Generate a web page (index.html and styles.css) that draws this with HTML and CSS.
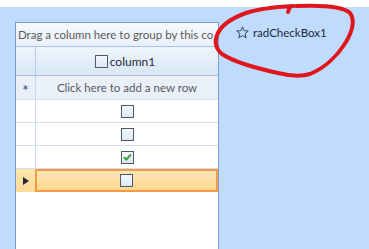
FILE: index.html
```html
<!DOCTYPE html>
<html lang="en">
<head>
  <meta charset="UTF-8">
  <title>Grid with check box column</title>
  <link rel="stylesheet" href="styles.css">
</head>
<body>
  <div class="topbar"></div>

  <div class="form">
    <div class="grid">
      <div class="group-panel">Drag a column here to group by this co</div>

      <div class="row header-row">
        <div class="indicator"></div>
        <div class="cell"><span class="check"></span>column1</div>
      </div>

      <div class="row new-row">
        <div class="indicator">*</div>
        <div class="cell">Click here to add a new row</div>
      </div>

      <div class="row">
        <div class="indicator"></div>
        <div class="cell"><span class="check"></span></div>
      </div>
      <div class="row">
        <div class="indicator"></div>
        <div class="cell"><span class="check"></span></div>
      </div>
      <div class="row">
        <div class="indicator"></div>
        <div class="cell"><span class="check checked">
          <svg width="9" height="8" viewBox="0 0 9 8"><path d="M1 4.2 L3.4 6.5 L8 1.5" fill="none" stroke="#3fa33c" stroke-width="2"/></svg>
        </span></div>
      </div>
      <div class="row current">
        <div class="indicator">
          <svg width="6" height="8" viewBox="0 0 6 8"><path d="M0 0 L6 4 L0 8 Z" fill="#1e2a3a"/></svg>
        </div>
        <div class="cell"><span class="check"></span></div>
      </div>
    </div>

    <div class="radio-check">
      <svg class="star" width="13" height="13" viewBox="0 0 13 13">
        <path d="M6.5 0.8 L8.1 4.7 L12.3 5 L9.1 7.7 L10.1 11.8 L6.5 9.6 L2.9 11.8 L3.9 7.7 L0.7 5 L4.9 4.7 Z" fill="none" stroke="#2d4768" stroke-width="1"/>
      </svg>
      <span>radCheckBox1</span>
    </div>
  </div>

  <!-- red marker annotation round the check box -->
  <svg class="annotation" width="369" height="249" viewBox="0 0 369 249">
    <path d="M288 12 C289 8 291 6 293 6 C275 7 258 9 246 13 C232 18 222 25 218 33 C214 41 215 48 222 54 C234 62 255 68 278 73 C290 76 300 77 310 74 C325 68 338 55 346 42 C353 30 355 20 350 13 C343 6 320 5 296 6"
          fill="none" stroke="#e0161c" stroke-width="4" stroke-linecap="round" stroke-linejoin="round"/>
  </svg>
</body>
</html>
```

FILE: styles.css
```css
body {
  margin: 0;
  height: 249px;
  overflow: hidden;
  background: #bfdbfe;
  font-family: Lato, "Noto Sans", sans-serif;
  font-size: 11.5px;
  color: #333;
  position: relative;
}
.topbar {
  height: 7px;
  background: #fff;
}
.form {
  display: flex;
  padding: 15px 0 0 15px;
}
.grid {
  width: 202px;
  height: 240px;
  border: 1px solid #7b9fd2;
  background: #fff;
  flex-shrink: 0;
}
.group-panel {
  height: 23px;
  line-height: 23px;
  padding-left: 2px;
  border-bottom: 1px solid #a9c1e2;
  background: linear-gradient(#f6f9fd, #e9f0fa);
  color: #5a5a5a;
  white-space: nowrap;
  overflow: hidden;
}
.row {
  display: flex;
  height: 22px;
  border-bottom: 1px solid #d3dfee;
}
.indicator {
  width: 19px;
  border-right: 1px solid #c9d8ec;
  display: flex;
  align-items: center;
  justify-content: center;
  flex-shrink: 0;
}
.cell {
  flex: 1;
  display: flex;
  align-items: center;
  justify-content: center;
}
.header-row {
  height: 28px;
  border-bottom: 1px solid #a9c1e2;
  background: linear-gradient(#eef4fb, #dae6f5);
  color: #1e2a3a;
  font-size: 12px;
}
.header-row .indicator {
  border-right-color: #b6cbe6;
}
.header-row .check {
  margin: 0 2px 0 -4px;
}
.new-row {
  height: 23px;
  background: #e9f0fa;
  color: #5a5a5a;
}
.new-row .indicator {
  font-size: 15px;
  color: #1e3a6a;
  padding-top: 4px;
}
.check {
  width: 11px;
  height: 11px;
  border: 1px solid #4b5a6e;
  background: linear-gradient(#f4f7fc, #dde6f3);
  display: inline-flex;
  align-items: center;
  justify-content: center;
}
.current {
  height: 23px;
  border-bottom: none;
  background: linear-gradient(#fde8b8, #fcd58c);
}
.current .indicator {
  border-right: none;
  background: linear-gradient(#fde6ad, #fcdc98);
}
.current .cell {
  border: 2px solid #f59b45;
}
.radio-check {
  display: flex;
  align-items: center;
  gap: 4px;
  margin: 2px 0 0 17px;
  height: 16px;
  color: #1e2a3a;
  font-size: 11.5px;
}
.annotation {
  position: absolute;
  left: 0;
  top: 0;
}
```
